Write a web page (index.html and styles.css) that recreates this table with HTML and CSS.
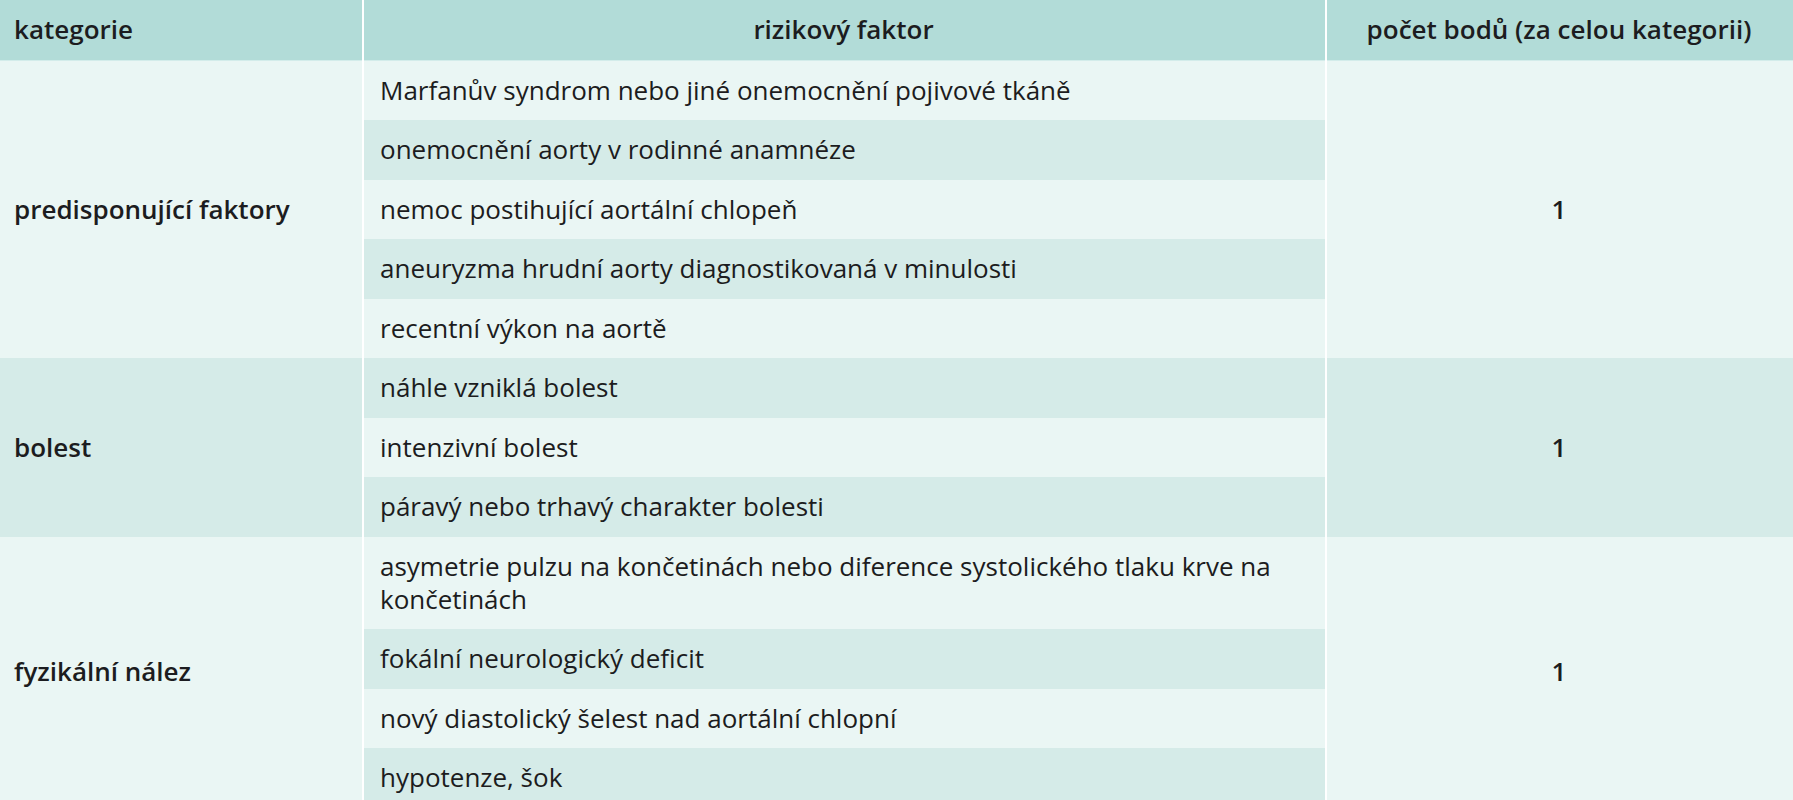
FILE: index.html
```html
<!DOCTYPE html>
<html lang="cs">
<head>
<meta charset="utf-8">
<title>Rizikové faktory</title>
<link rel="stylesheet" href="styles.css">
</head>
<body>
<table class="risk">
  <colgroup>
    <col class="c-cat">
    <col class="c-factor">
    <col class="c-points">
  </colgroup>
  <thead>
    <tr>
      <th class="h-cat">kategorie</th>
      <th class="h-mid">rizikový faktor</th>
      <th class="h-mid">počet bodů (za celou kategorii)</th>
    </tr>
  </thead>
  <tbody>
    <tr class="r-light">
      <td class="cat g-light" rowspan="5">predisponující faktory</td>
      <td class="f">Marfanův syndrom nebo jiné onemocnění pojivové tkáně</td>
      <td class="pts g-light" rowspan="5">1</td>
    </tr>
    <tr class="r-dark"><td class="f">onemocnění aorty v rodinné anamnéze</td></tr>
    <tr class="r-light"><td class="f">nemoc postihující aortální chlopeň</td></tr>
    <tr class="r-dark"><td class="f">aneuryzma hrudní aorty diagnostikovaná v minulosti</td></tr>
    <tr class="r-light"><td class="f">recentní výkon na aortě</td></tr>

    <tr class="r-dark">
      <td class="cat g-dark" rowspan="3">bolest</td>
      <td class="f">náhle vzniklá bolest</td>
      <td class="pts g-dark" rowspan="3">1</td>
    </tr>
    <tr class="r-light"><td class="f">intenzivní bolest</td></tr>
    <tr class="r-dark"><td class="f">páravý nebo trhavý charakter bolesti</td></tr>

    <tr class="r-light">
      <td class="cat g-light" rowspan="4">fyzikální nález</td>
      <td class="f">asymetrie pulzu na končetinách nebo diference systolického tlaku krve na končetinách</td>
      <td class="pts g-light" rowspan="4">1</td>
    </tr>
    <tr class="r-dark"><td class="f">fokální neurologický deficit</td></tr>
    <tr class="r-light"><td class="f">nový diastolický šelest nad aortální chlopní</td></tr>
    <tr class="r-dark"><td class="f">hypotenze, šok</td></tr>
  </tbody>
</table>
</body>
</html>
```
FILE: styles.css
```css
html, body {
  margin: 0;
  padding: 0;
  background: #eaf6f4;
}

.risk {
  width: 1793px;
  border-collapse: collapse;
  table-layout: fixed;
  font-family: "Open Sans", "Noto Sans", sans-serif;
  font-size: 26px;
  color: #1c1c20;
}

.c-cat { width: 363px; }
.c-factor { width: 963px; }
.c-points { width: 467px; }

.risk th,
.risk td {
  border-left: 2px solid #ffffff;
  border-right: 2px solid #ffffff;
  line-height: 33px;
  padding: 13px 18px 13.5px 16px;
  vertical-align: middle;
}

.risk th:first-child,
.risk td.cat { border-left: none; }
.risk th:last-child,
.risk td.pts { border-right: none; }

.risk thead th {
  background: #b2dcd8;
  font-weight: 600;
  border-bottom: 1px solid #d3ecea;
  padding-top: 13px;
  padding-bottom: 13.5px;
}

.h-cat { text-align: left; }
.h-mid { text-align: center; }

.risk th.h-cat,
.risk td.cat { padding-left: 14px; }

.cat {
  font-weight: 600;
  text-align: left;
}

.pts {
  font-weight: 600;
  text-align: center;
}

.g-light { background: #eaf6f4; }
.g-dark { background: #d5ebe8; }

.r-light .f { background: #eaf6f4; }
.r-dark .f { background: #d5ebe8; }
```
